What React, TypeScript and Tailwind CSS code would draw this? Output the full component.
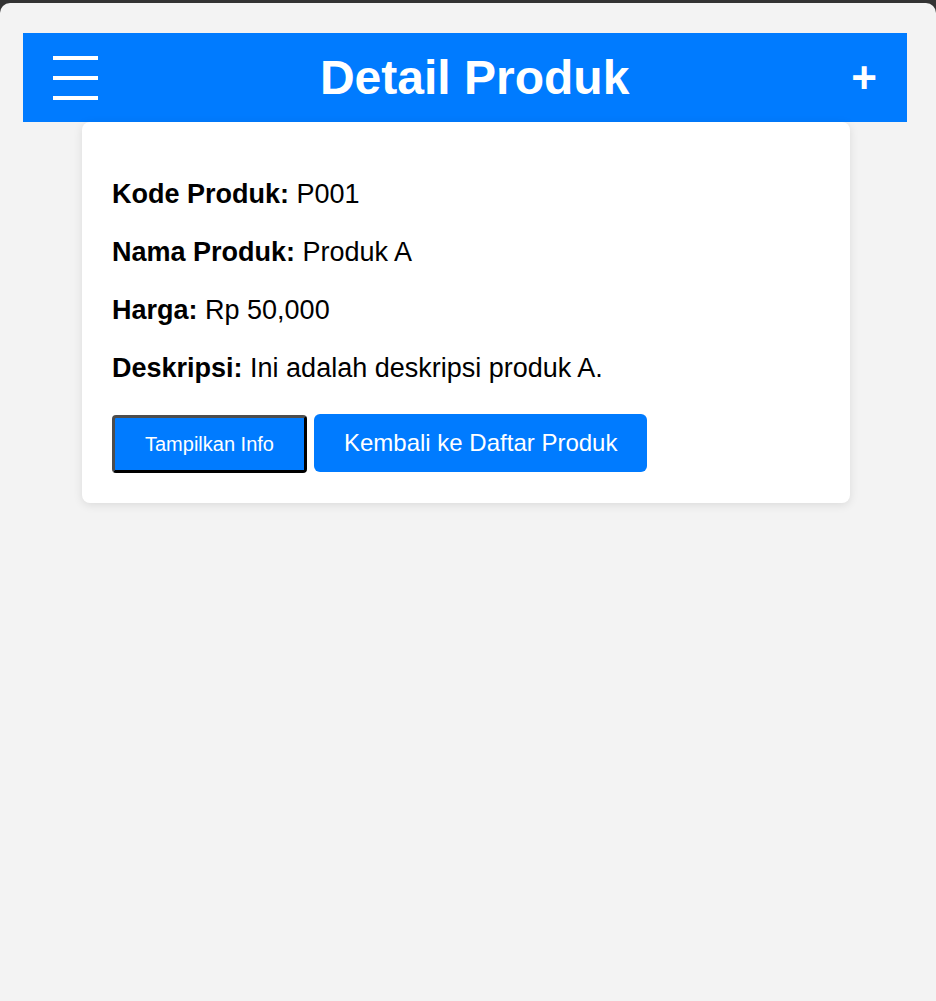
import React from 'react';

const details = [
    { label: 'Kode Produk:', value: 'P001' },
    { label: 'Nama Produk:', value: 'Produk A' },
    { label: 'Harga:', value: 'Rp 50,000' },
    { label: 'Deskripsi:', value: 'Ini adalah deskripsi produk A.' },
];

const App: React.FC = () => {
    return (
        <div
            className="min-h-screen bg-[#333333] pt-[3px]"
            style={{ fontFamily: '"Liberation Sans", Arial, sans-serif' }}
        >
            <div className="min-h-[998px] rounded-t-[10px] bg-[#f3f3f3] pt-[30px] pl-[23px] pr-[29px]">
                <header className="flex h-[89px] items-center justify-between bg-[#007bff] px-[30px] text-white">
                    <button className="flex flex-col gap-[16px]" aria-label="Menu">
                        <span className="block h-[4px] w-[45px] bg-white" />
                        <span className="block h-[4px] w-[45px] bg-white" />
                        <span className="block h-[4px] w-[45px] bg-white" />
                    </button>
                    <h1 className="text-[48px] font-bold leading-[1.15]">Detail Produk</h1>
                    <button className="text-[44px] font-bold leading-none" aria-label="Tambah">
                        +
                    </button>
                </header>

                <main className="ml-[59px] w-[768px] rounded-[8px] bg-white p-[30px] shadow-[0_2px_10px_rgba(0,0,0,0.1)]">
                    {details.map((item) => (
                        <p key={item.label} className="my-[27px] text-[27px] leading-[1.15] text-black">
                            <strong className="font-bold">{item.label}</strong> {item.value}
                        </p>
                    ))}

                    <div className="mt-[30px] flex items-start gap-[7px]">
                        <button className="mt-[1px] h-[58px] rounded-[4px] border-[3px] border-t-[#4d4d4d] border-l-[#4d4d4d] border-r-black border-b-black bg-[#007bff] px-[30px] text-[20px] text-white">
                            Tampilkan Info
                        </button>
                        <button className="h-[58px] rounded-[6px] bg-[#007bff] px-[30px] text-[24px] text-white">
                            Kembali ke Daftar Produk
                        </button>
                    </div>
                </main>
            </div>
        </div>
    );
};

export default App;
